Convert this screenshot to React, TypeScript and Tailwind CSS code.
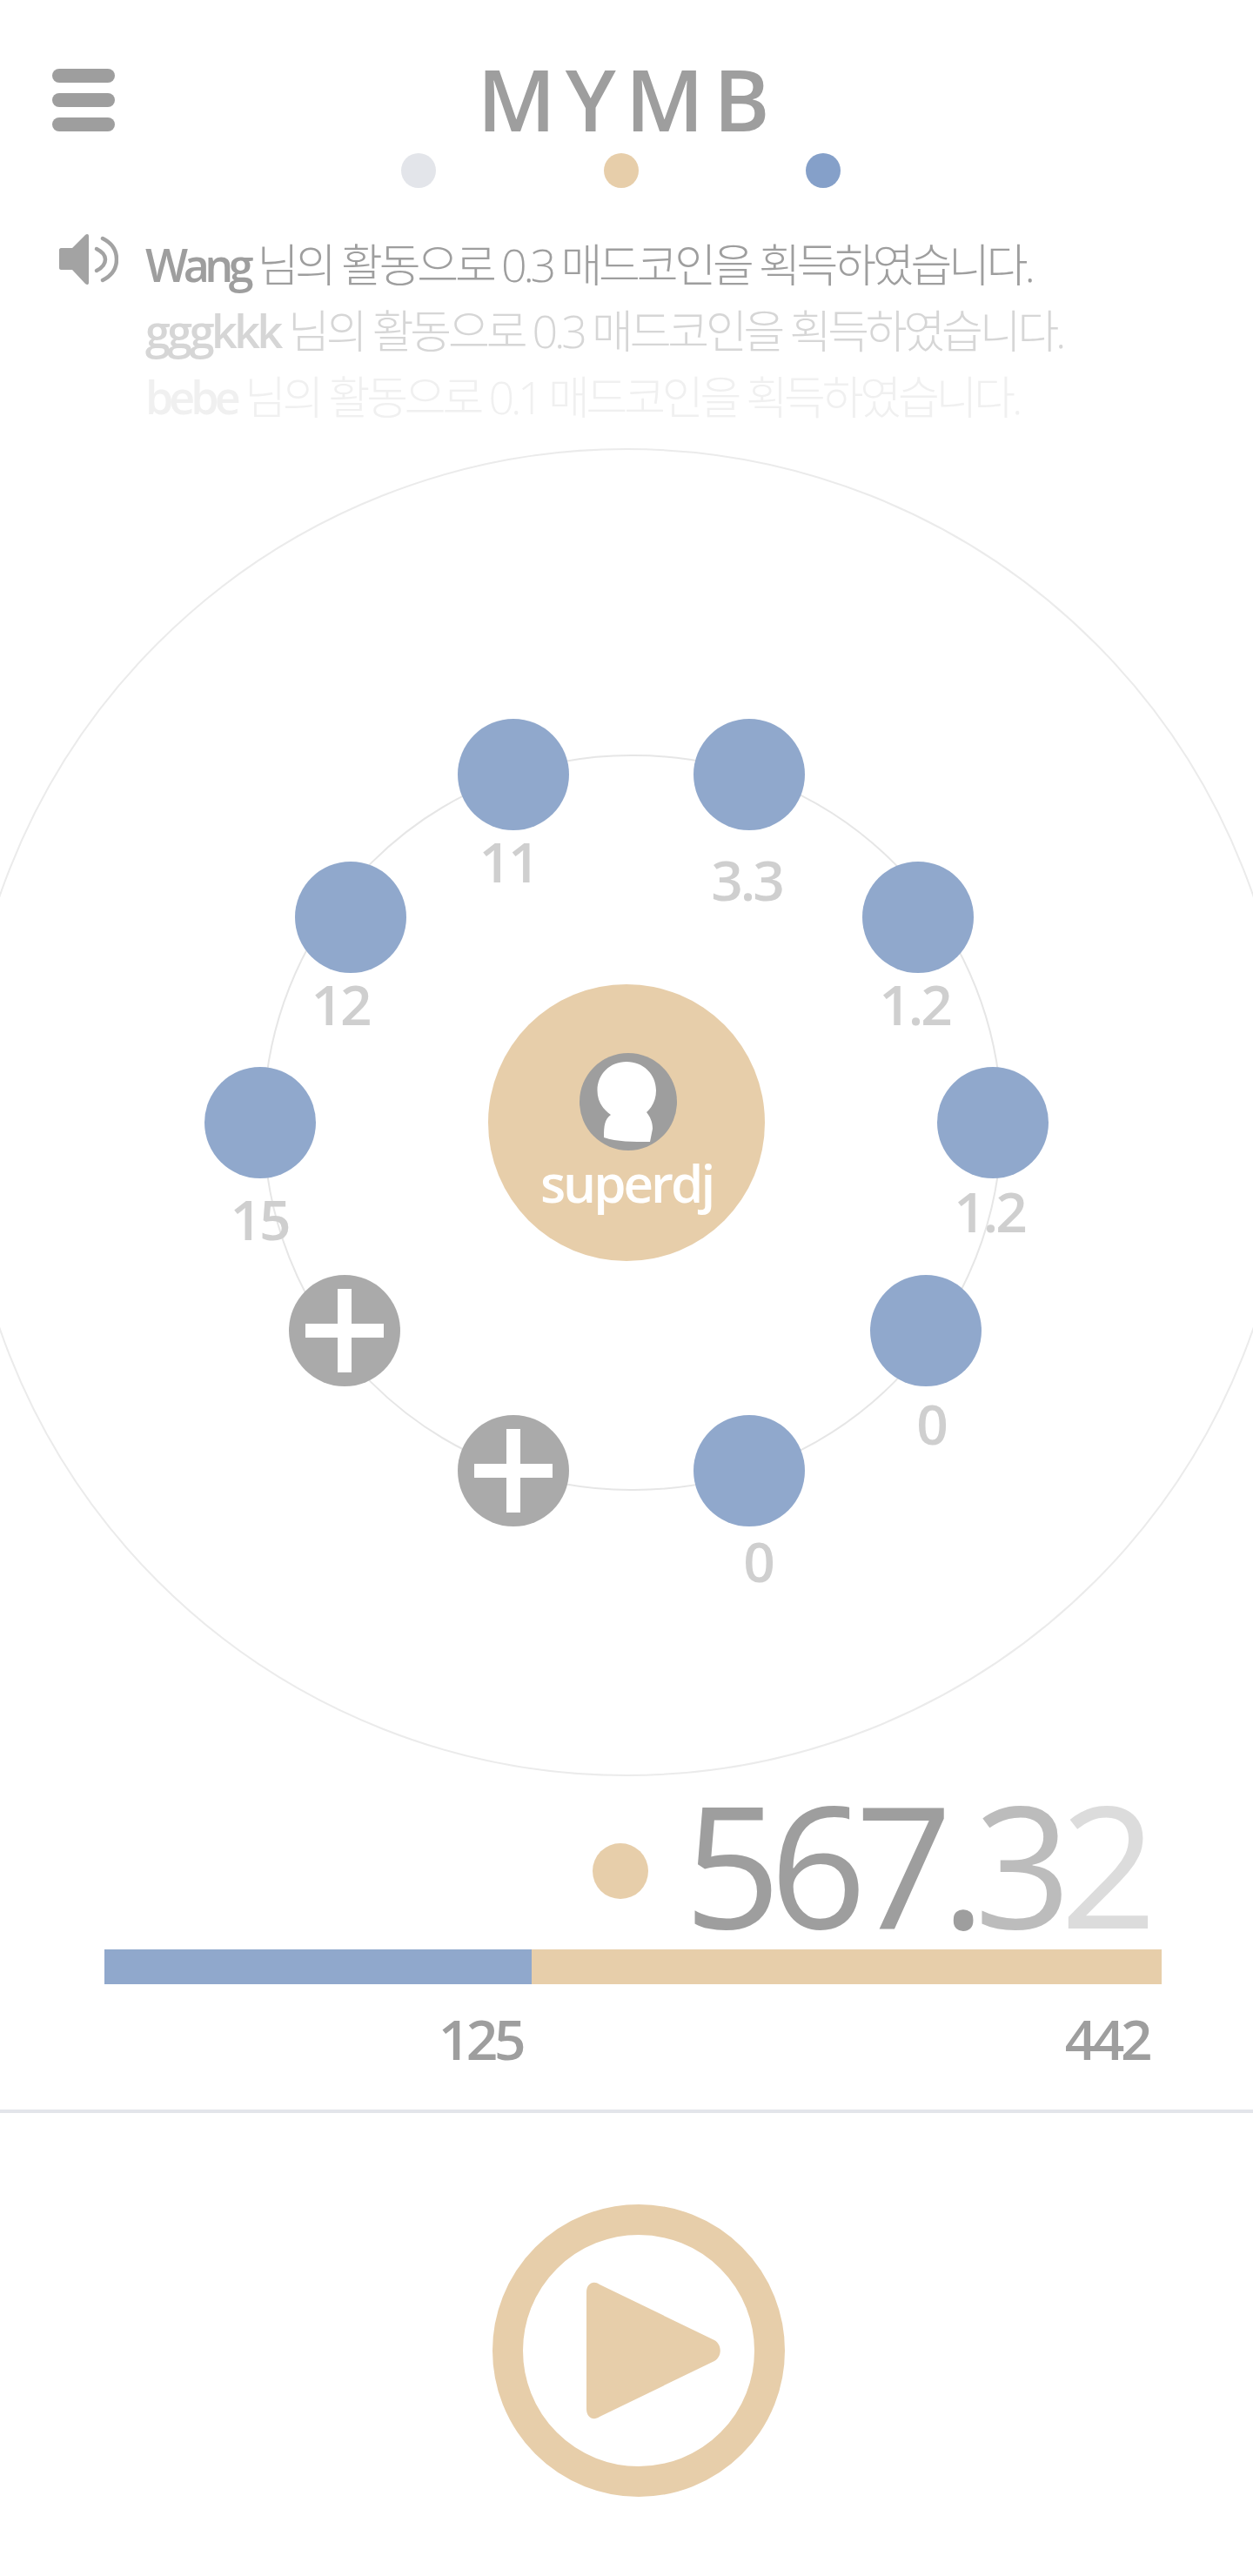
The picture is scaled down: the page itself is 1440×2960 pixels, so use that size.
const openSans = { fontFamily: '"Open Sans", "Noto Sans CJK KR", sans-serif' }

const tickers = [
  { name: 'Wang', amount: '0.3', color: 'text-[#9e9e9e]', nameTrack: 'tracking-[-5.500px]' },
  { name: 'gggkkk', amount: '0.3', color: 'text-[#d6d6d6]', nameTrack: 'tracking-[-3.500px]' },
  { name: 'bebe', amount: '0.1', color: 'text-[#f0f0f0]', nameTrack: 'tracking-[-5px]' },
]

// center circle sits at x=720, canvas starts at y=510
const nodes = [
  { pos: 'left-[526px] top-[316px]', plus: false },
  { pos: 'left-[797px] top-[316px]', plus: false },
  { pos: 'left-[991px] top-[480px]', plus: false },
  { pos: 'left-[1077px] top-[716px]', plus: false },
  { pos: 'left-[1000px] top-[955px]', plus: false },
  { pos: 'left-[797px] top-[1116px]', plus: false },
  { pos: 'left-[526px] top-[1116px]', plus: true },
  { pos: 'left-[332px] top-[955px]', plus: true },
  { pos: 'left-[235px] top-[716px]', plus: false },
  { pos: 'left-[339px] top-[480px]', plus: false },
]

const labels = [
  { text: '11', pos: 'left-[584px] top-[480px]' },
  { text: '3.3', pos: 'left-[858px] top-[501px]' },
  { text: '1.2', pos: 'left-[1051px] top-[644px]' },
  { text: '1.2', pos: 'left-[1137px] top-[882px]' },
  { text: '0', pos: 'left-[1070px] top-[1126px]' },
  { text: '0', pos: 'left-[871px] top-[1284px]' },
  { text: '15', pos: 'left-[298px] top-[891px]' },
  { text: '12', pos: 'left-[391px] top-[644px]' },
]

function Speaker() {
  return (
    <svg width="68" height="62" viewBox="0 0 68 62" className="shrink-0">
      <path d="M2 18h13L30 3c2-2 4-1 4 1v54c0 2-2 3-4 1L15 43H2c-1 0-2-1-2-2V20c0-1 1-2 2-2z" fill="#a3a3a3" />
      <path d="M43 19c6 3 10 7 10 12s-4 10-10 13" fill="none" stroke="#a3a3a3" strokeWidth="4.5" strokeLinecap="round" />
      <path d="M50 7c10 5 16 13 16 24s-6 19-16 24" fill="none" stroke="#a3a3a3" strokeWidth="4.5" strokeLinecap="round" />
    </svg>
  )
}

function Avatar() {
  return (
    <svg width="112" height="112" viewBox="0 0 112 112" className="block ml-[3px]">
      <circle cx="56" cy="56" r="56" fill="#9e9e9e" />
      <path d="M36 71C26 64 20.500 55 20.500 43 20.500 24 35 10 54 10s34 14 34 33c0 10-4 19-11 25 4 5 7 11 7 19l-3 15c-20 0-38 0-53-5 0-14 1-21 8-26z" fill="#fff" />
    </svg>
  )
}

function PlusIcon() {
  return (
    <svg width="90" height="96" viewBox="0 0 90 96">
      <rect x="0" y="40" width="90" height="16" fill="#fff" />
      <rect x="37" y="0" width="16" height="96" fill="#fff" />
    </svg>
  )
}

export default function App() {
  return (
    <div className="w-[1440px] h-[2960px] bg-white overflow-hidden" style={openSans}>
      <header className="grid grid-cols-[1fr_auto_1fr] items-start px-[60px] pt-[79px] h-[176px]">
        <div className="flex flex-col gap-[12px] w-[72px]">
          <span className="h-[16px] rounded-full bg-[#9e9e9e]" />
          <span className="h-[16px] rounded-full bg-[#9e9e9e]" />
          <span className="h-[16px] rounded-full bg-[#9e9e9e]" />
        </div>
        <h1 className="-mt-[12px] ml-[4px] text-[98px] leading-[92px] font-semibold tracking-[11px] text-[#9e9e9e]">MYMB</h1>
      </header>

      <div className="flex gap-[192.500px] pl-[461px]">
        <span className="size-[40px] rounded-full bg-[#e3e5ea]" />
        <span className="size-[40px] rounded-full bg-[#e7ceaa]" />
        <span className="size-[40px] rounded-full bg-[#85a0c9]" />
      </div>

      <section className="flex gap-[31px] pl-[68px] pt-[51px] h-[294px]">
        <Speaker />
        <div className="flex flex-col text-[52px] leading-[76px] tracking-[-4.200px] -mt-[1px]">
          {tickers.map((t) => (
            <p key={t.name} className={`${t.color} whitespace-nowrap`}>
              <span className={`font-semibold ${t.nameTrack}`}>{t.name}</span>
              <span className="font-light"> 님의 활동으로 {t.amount} 매드코인을 획득하였습니다.</span>
            </p>
          ))}
        </div>
      </section>

      <section className="relative h-[1540px]">
        <div className="absolute left-[-43px] top-[5px] size-[1526px] rounded-full border-2 border-[#ebebeb]" />
        <div className="absolute left-[302px] top-[357px] w-[850px] h-[846px] rounded-full border-2 border-[#e6e6e6]" />

        {nodes.map((n) => (
          <div
            key={n.pos}
            className={`absolute ${n.pos} size-[128px] rounded-full flex items-center justify-center ${n.plus ? 'bg-[#aaaaaa]' : 'bg-[#90a8cc]'}`}
          >
            {n.plus && <PlusIcon />}
          </div>
        ))}

        {labels.map((l) => (
          <span
            key={l.pos}
            className={`absolute ${l.pos} -translate-x-1/2 -translate-y-1/2 text-[64px] leading-none font-semibold tracking-[-3px] text-[#cfcfcf]`}
          >
            {l.text}
          </span>
        ))}

        <div className="absolute left-[561px] top-[621px] size-[318px] rounded-full bg-[#e7ceaa] flex flex-col items-center pt-[79px]">
          <Avatar />
          <span className="-mt-[3px] text-[60px] leading-[80px] font-semibold tracking-[-3px] text-white">superdj</span>
        </div>
      </section>

      <div className="flex h-[190px] items-start pl-[681px]">
        <span className="mt-[68px] size-[64px] rounded-full bg-[#e7ceaa]" />
        <p className="ml-[41px] -mt-[4px] text-[195px] leading-[190px] tracking-[-13px] text-[#9e9e9e] whitespace-nowrap">
          567.<span className="text-[#bcbcbc]">3</span>
          <span className="text-[#dcdcdc]">2</span>
        </p>
      </div>

      <div className="flex h-[40px] mx-[120px] w-[1215px]">
        <div className="w-[491px] bg-[#90a8cc]" />
        <div className="flex-1 bg-[#e7ceaa]" />
      </div>

      <div className="flex h-[144px] pt-[27px] text-[64px] leading-[72px] font-semibold tracking-[-4.500px] text-[#9e9e9e]">
        <span className="w-[600px] text-right">125</span>
        <span className="w-[720px] text-right">442</span>
      </div>

      <div className="h-[4px] bg-[#e3e5ea]" />

      <div className="pt-[105px] pl-[566px]">
        <button className="size-[336px] rounded-full border-[35px] border-[#e7ceaa] flex items-center justify-center pl-[34px]">
          <svg width="154" height="158" viewBox="0 0 154 158">
            <path d="M0 12C0 2 8-2 15 3l132 64c9 5 9 19 0 24L15 155c-7 5-15 1-15-9z" fill="#e7ceaa" />
          </svg>
        </button>
      </div>
    </div>
  )
}
